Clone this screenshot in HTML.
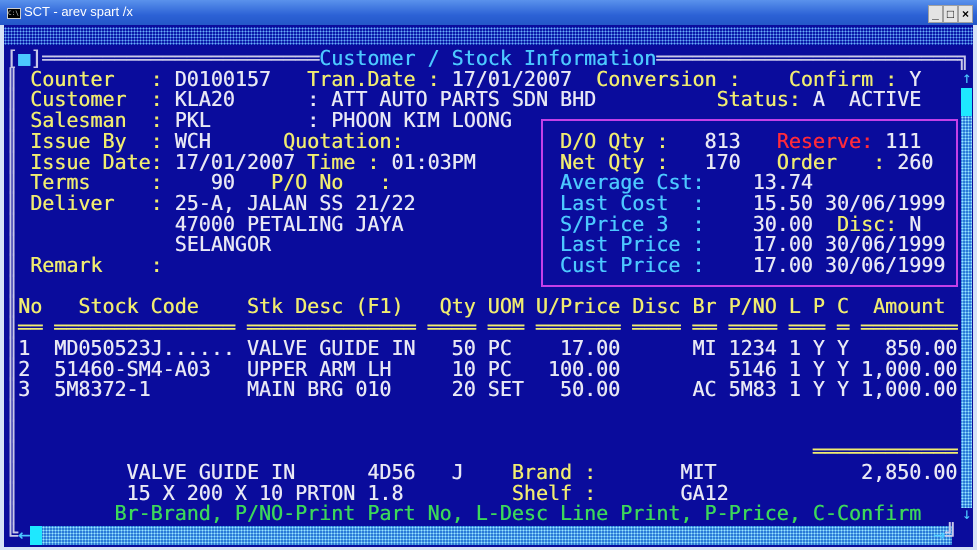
<!DOCTYPE html>
<html><head><meta charset="utf-8"><style>
html,body{margin:0;padding:0;}
body{width:977px;height:550px;overflow:hidden;background:#d6e2f6;position:relative;font-family:"DejaVu Sans Mono","Liberation Mono",monospace;}
#tb{position:absolute;left:0;top:0;width:977px;height:25px;background:linear-gradient(#5a92ec,#2c62d6 60%,#2458c8);}
#tb .t{position:absolute;left:24px;top:4px;font:13px "Liberation Sans",sans-serif;color:#fff;}
#tb .ic{position:absolute;left:7px;top:8px;width:12px;height:9px;background:#000;border:1px solid #ccc;font-size:6px;color:#ccc;line-height:9px;}
.btn{position:absolute;top:5px;width:13px;height:16px;background:#e4e4e4;border:1px solid #a0a0a0;font:bold 12px "Liberation Sans",sans-serif;color:#000;text-align:center;line-height:16px;}
#con{position:absolute;left:4px;top:25px;width:969px;height:522px;background:#0a0c9c;}
.dots{background-color:#0a18a8;background-image:radial-gradient(#6ab0f8 45%,transparent 50%);background-size:3px 3px;}
.dots2{background-color:#2a7ad8;background-image:radial-gradient(#9ae8ff 45%,transparent 50%);background-size:3px 3px;}
pre{position:absolute;left:6px;top:48px;margin:0;font-size:20px;line-height:20.7px;color:#e8e8f4;font-family:"DejaVu Sans Mono",monospace;text-shadow:0.4px 0 0 currentColor;}
.y{color:#f0ec70}.c{color:#4cc8ff}.r{color:#ff2a3a}.g{color:#3cd85a}.w{color:#eeeef6}.f{color:#c8c8e8}
</style></head><body>
<div id="tb"><div class="ic">C:\</div><div class="t">SCT - arev spart /x</div>
<div class="btn" style="left:928px">_</div><div class="btn" style="left:943px">□</div><div class="btn" style="left:958px">×</div></div>
<div id="con"></div>
<div class="dots" style="position:absolute;left:4px;top:27px;width:969px;height:18px"></div>
<div class="dots2" style="position:absolute;left:961px;top:116px;width:11px;height:392px"></div>
<div style="position:absolute;left:961px;top:88px;width:11px;height:28px;background:#1ee8ff"></div>
<div style="position:absolute;left:962px;top:68px;color:#4cc8ff;font-size:16px;line-height:20px">↑</div>
<div style="position:absolute;left:962px;top:504px;color:#4cc8ff;font-size:16px;line-height:20px">↓</div>
<div class="dots2" style="position:absolute;left:42px;top:526px;width:910px;height:19px"></div>
<div style="position:absolute;left:30px;top:526px;width:12px;height:19px;background:#1ee8ff"></div>
<div style="position:absolute;left:541px;top:119px;width:413px;height:164px;border:2px solid #c440e8"></div>
<pre><span class="f">[</span><span class="c">■</span><span class="f">]═══════════════════════</span><span class="c">Customer / Stock Information</span><span class="f">═════════════════════════╗</span>
<span class="f">║</span> <span class="y">Counter   :</span> D0100157   <span class="y">Tran.Date :</span> 17/01/2007  <span class="y">Conversion :    Confirm :</span> Y
<span class="f">║</span> <span class="y">Customer  :</span> KLA20      : ATT AUTO PARTS SDN BHD          <span class="y">Status:</span> A  ACTIVE
<span class="f">║</span> <span class="y">Salesman  :</span> PKL        : PHOON KIM LOONG
<span class="f">║</span> <span class="y">Issue By  :</span> WCH      <span class="y">Quotation:</span>             <span class="y">D/O Qty :</span>   813   <span class="r">Reserve:</span> 111
<span class="f">║</span> <span class="y">Issue Date:</span> 17/01/2007 <span class="y">Time :</span> 01:03PM       <span class="y">Net Qty :</span>   170   <span class="y">Order   :</span> 260
<span class="f">║</span> <span class="y">Terms     :</span>    90   <span class="y">P/O No   :</span>              <span class="c">Average Cst:</span>    13.74
<span class="f">║</span> <span class="y">Deliver   :</span> 25-A, JALAN SS 21/22            <span class="c">Last Cost  :</span>    15.50 30/06/1999
<span class="f">║</span>             47000 PETALING JAYA             <span class="c">S/Price 3  :</span>    30.00  <span class="y">Disc:</span> N
<span class="f">║</span>             SELANGOR                        <span class="c">Last Price :</span>    17.00 30/06/1999
<span class="f">║</span> <span class="y">Remark    :</span>                                 <span class="c">Cust Price :</span>    17.00 30/06/1999
<span class="f">║</span>
<span class="f">║</span><span class="y">No   Stock Code    Stk Desc (F1)   Qty UOM U/Price Disc Br P/NO L P C  Amount</span>
<span class="f">║</span><span class="y">══ ═══════════════ ══════════════ ════ ═══ ═══════ ════ ══ ════ ═══ ═ ════════</span>
<span class="f">║</span>1  MD050523J...... VALVE GUIDE IN   50 PC    17.00      MI 1234 1 Y Y   850.00
<span class="f">║</span>2  51460-SM4-A03   UPPER ARM LH     10 PC   100.00         5146 1 Y Y 1,000.00
<span class="f">║</span>3  5M8372-1        MAIN BRG 010     20 SET   50.00      AC 5M83 1 Y Y 1,000.00
<span class="f">║</span>
<span class="f">║</span>
<span class="f">║</span>                                                                  <span class="y">════════════</span>
<span class="f">║</span>         VALVE GUIDE IN      4D56   J    <span class="y">Brand :</span>       MIT            2,850.00
<span class="f">║</span>         15 X 200 X 10 PRTON 1.8         <span class="y">Shelf :</span>       GA12
<span class="f">║</span>        <span class="g">Br-Brand, P/NO-Print Part No, L-Desc Line Print, P-Price, C-Confirm</span>
<span class="f">╚</span><span class="c">←</span>                                                                           <span class="c">→</span><span class="f">╝</span></pre>
</body></html>
